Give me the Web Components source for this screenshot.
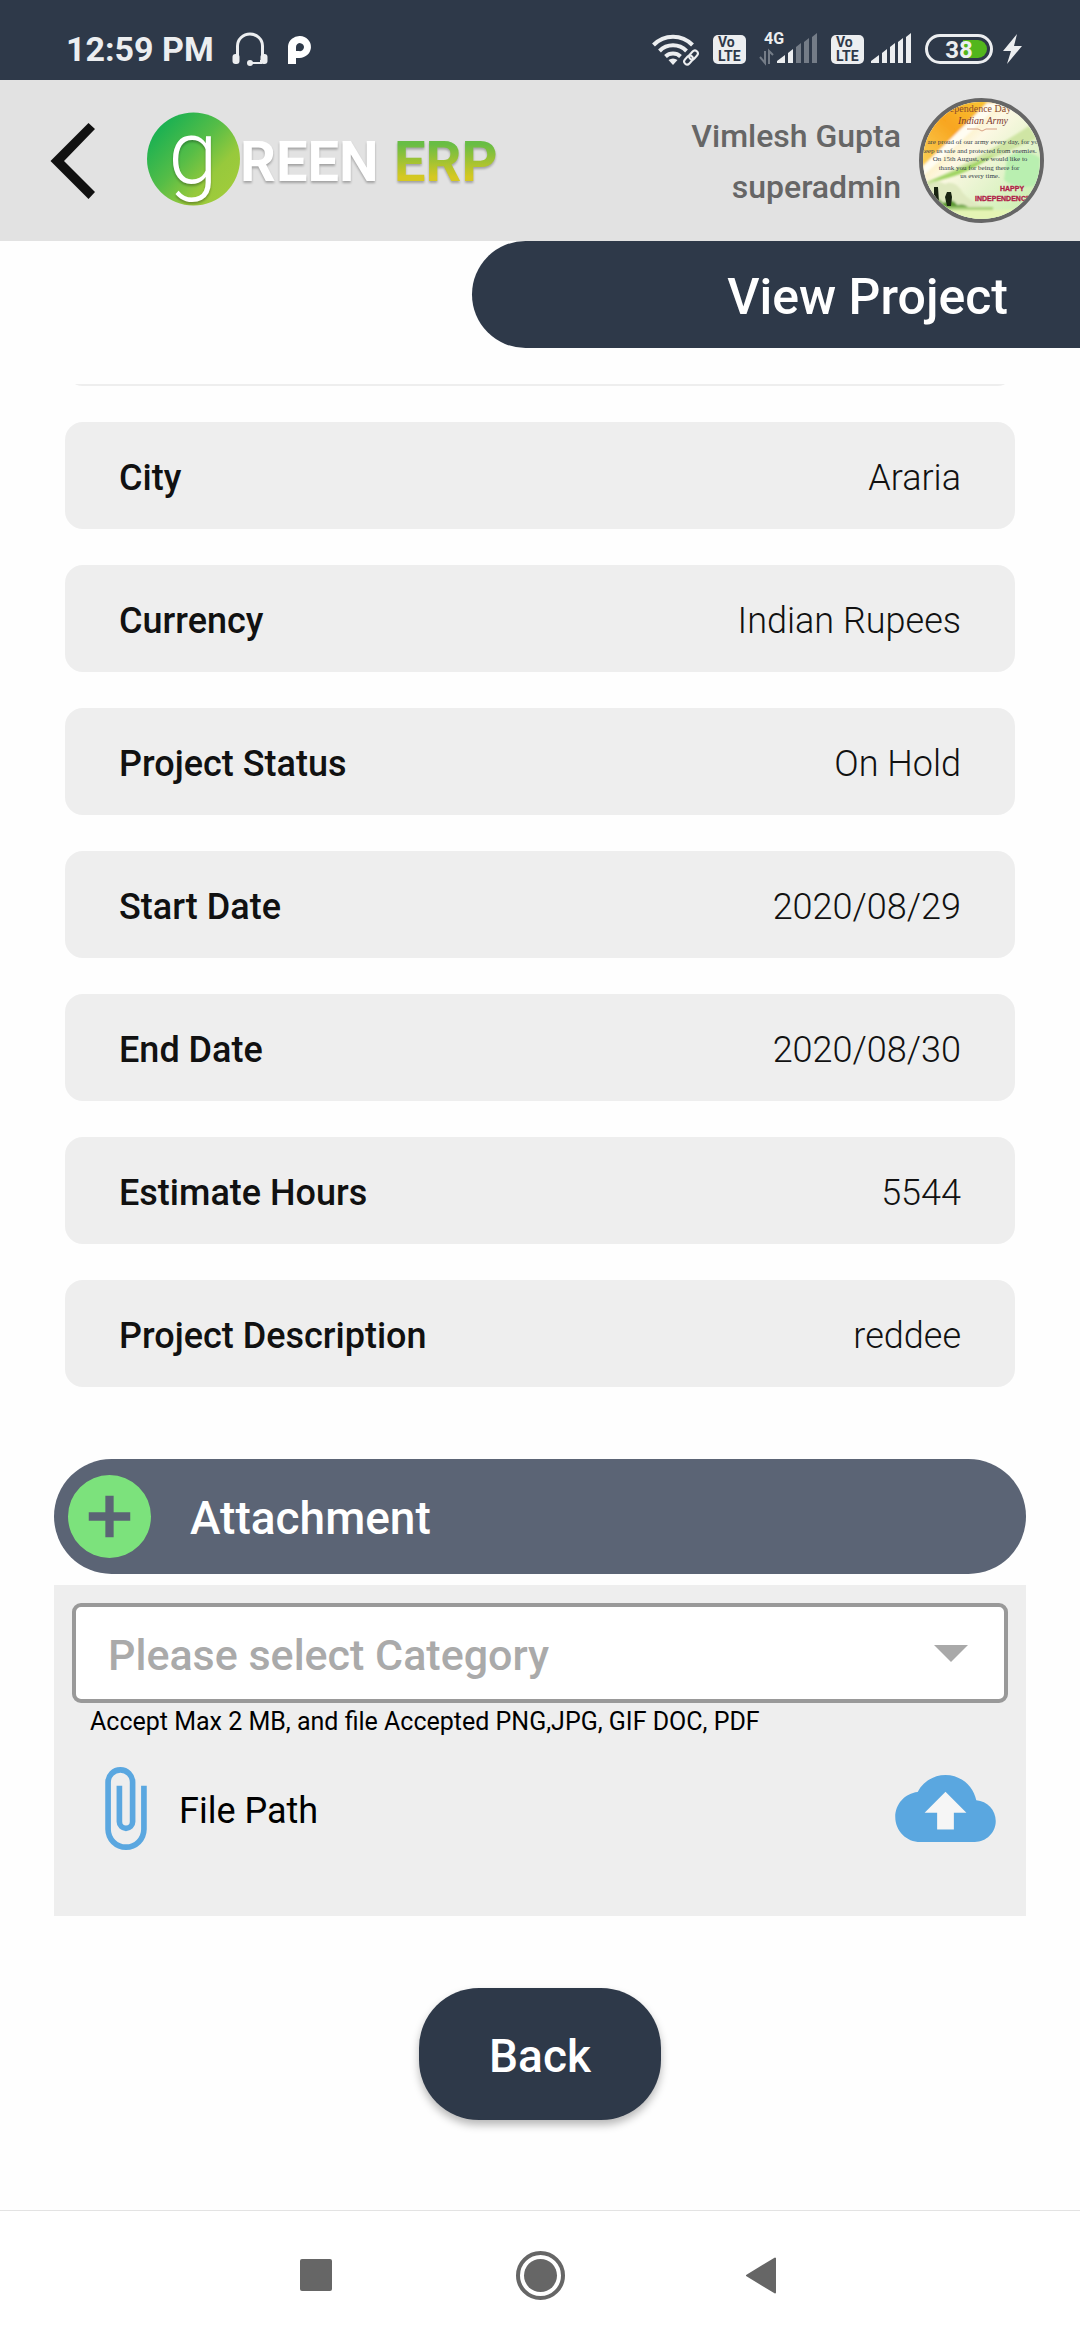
<!DOCTYPE html>
<html lang="en">
<head>
<meta charset="utf-8">
<meta name="viewport" content="width=device-width, initial-scale=1">
<title>View Project</title>
<style>
  html, body { margin: 0; }
  body { background: #fefefe; font-family: Roboto, "Liberation Sans", sans-serif; color: #111; }
</style>
</head>
<body>
<project-screen></project-screen>

<script>
const define = (name, html) => {
  const template = document.createElement('template');
  template.innerHTML = html;
  customElements.define(name, class extends HTMLElement {
    constructor() {
      super();
      this.attachShadow({ mode: 'open' }).append(template.content.cloneNode(true));
    }
  });
};

define('volte-badge', `
<style>
  :host { display: block; height: 34px; }
  svg { display: block; }
</style>
<svg width="33" height="34" viewBox="0 0 33 34" font-family="Roboto, sans-serif" font-weight="700" fill="#2e3949">
  <rect y="3" width="33" height="29" rx="5" fill="#eceef0"/>
  <text x="5" y="15" font-size="14">Vo</text>
  <text x="5" y="29" font-size="14">LTE</text>
</svg>`);

define('status-bar', `
<style>
  :host { display: flex; align-items: center; height: 34px; padding: 32px 58px 14px 66px; background: #2e3949; color: #eceef0; }
  svg { display: block; flex: none; overflow: visible; }
  time { font-size: 34px; line-height: 34px; font-weight: 700; }
  .start, .end, .signal { display: flex; align-items: center; }
  .start { gap: 18px; }
  .end { margin-left: auto; gap: 14px; }
  .signal { gap: 7px; }
  .power { display: flex; gap: 10px; }
</style>
<div class="start">
  <time>12:59 PM</time>
  <svg width="36" height="34" viewBox="0 0 36 34" fill="none" stroke="#eceef0" stroke-width="3">
    <path d="M5.500 24V14a12.500 12 0 0 1 25 0v10"/>
    <path d="M18 31h11v-3" stroke-width="2"/>
    <g fill="#eceef0" stroke="none">
      <rect x="0.500" y="22" width="7" height="10" rx="3"/><rect x="28.500" y="22" width="7" height="10" rx="3"/><circle cx="18" cy="31" r="3"/>
    </g>
  </svg>
  <svg width="26" height="34" viewBox="0 0 26 34">
    <path d="M2 32V14a11.500 11 0 1 1 11.500 12H10v6zM10 19h3a4 4 0 1 0-3-4z" fill="#fff" fill-rule="evenodd"/>
  </svg>
</div>
<div class="end">
  <svg width="47" height="34" viewBox="0 0 47 34" fill="none" stroke="#eceef0" stroke-width="4">
    <path d="M1.500 13a27 27 0 0 1 39 0M7.500 19a19 19 0 0 1 27 0M13.500 24.500a11 11 0 0 1 15 0"/>
    <path d="M16.500 28q4.500-3 9 0L21 33z" fill="#eceef0" stroke="none"/>
    <g stroke="#2e3949" stroke-width="5"><rect x="-5" y="-3" width="10" height="6" rx="3" transform="translate(41.500 23) rotate(-48)"/><rect x="-5" y="-3" width="10" height="6" rx="3" transform="translate(36.500 28) rotate(-48)"/></g>
    <g stroke-width="2"><rect x="-5" y="-3" width="10" height="6" rx="3" transform="translate(41.500 23) rotate(-48)"/><rect x="-5" y="-3" width="10" height="6" rx="3" transform="translate(36.500 28) rotate(-48)"/></g>
  </svg>
  <volte-badge></volte-badge>
  <svg width="57" height="34" viewBox="0 0 57 34">
    <text x="4" y="12" font-family="Roboto, sans-serif" font-weight="700" font-size="16" fill="#eceef0">4G</text>
    <path d="M0 25l5 6V19M13 23l-4-4v13" fill="none" stroke="#747c87" stroke-width="2"/>
    <path d="M17 31v-2l8-6v8zM28 31V21l5-4v14z" fill="#eceef0"/>
    <path d="M36 31V15l5-4v20zM44 31V10l5-4v25zM52 31V5l5-4v30z" fill="#747c87"/>
  </svg>
  <div class="signal">
    <volte-badge></volte-badge>
    <svg width="40" height="34" viewBox="0 0 40 34"><path d="M0 31v-2l8-6v8zM11 31V21l5-4v14zM19 31V15l5-4v20zM27 31V10l5-4v25zM35 31V5l5-4v30z" fill="#eceef0"/></svg>
  </div>
  <div class="power">
    <svg width="68" height="34" viewBox="0 0 68 34">
      <rect x="1.500" y="3.500" width="65" height="27" rx="13.500" fill="none" stroke="#eceef0" stroke-width="3"/>
      <path d="M38 8h15a9 9 0 0 1 0 18H38z" fill="#52b61c"/>
      <text x="34" y="26" text-anchor="middle" font-family="Roboto, sans-serif" font-weight="700" font-size="24" fill="#eceef0">38</text>
    </svg>
    <svg width="19" height="34" viewBox="0 0 19 34"><path d="M14 2L0 19h8L4 32l15-18h-8z" fill="#eceef0"/></svg>
  </div>
</div>`);

define('brand-logo', `
<style>
  :host { display: block; }
  svg { display: block; overflow: visible; }
  .lettering { filter: drop-shadow(0 2px 1px rgba(0,0,0,.28)); }
</style>
<svg width="352" height="97" viewBox="0 0 352 97" font-family="Roboto, sans-serif">
  <defs>
    <linearGradient id="ball" x1="0.100" y1="0.150" x2="0.850" y2="0.850">
      <stop offset="0" stop-color="#17b053"/><stop offset=".45" stop-color="#55bd47"/><stop offset=".78" stop-color="#97c93c"/><stop offset="1" stop-color="#9fcb3b"/>
    </linearGradient>
    <linearGradient id="word" gradientUnits="userSpaceOnUse" x1="0" y1="28" x2="0" y2="69">
      <stop offset="0.100" stop-color="#68bd45"/><stop offset=".9" stop-color="#d5c822"/>
    </linearGradient>
  </defs>
  <circle cx="46.500" cy="47" r="46.500" fill="url(#ball)"/>
  <g class="lettering" fill="#fff">
    <text x="46" y="71" text-anchor="middle" font-size="89" font-weight="300">g</text>
    <text x="93" y="69" font-size="56" font-weight="700">REEN</text>
    <text x="247" y="69" font-size="56" font-weight="700" fill="url(#word)">ERP</text>
  </g>
</svg>`);

define('user-avatar', `
<style>
  :host { display: block; width: 117px; height: 117px; border: 4px solid #666; border-radius: 50%; overflow: hidden; }
  svg { display: block; }
</style>
<svg width="117" height="117" viewBox="4 4 117 117" text-anchor="middle">
  <defs>
    <linearGradient id="sky" x1="0" y1="0" x2="1" y2="1">
      <stop offset="0" stop-color="#ffd75a"/><stop offset=".4" stop-color="#fdf8e4"/><stop offset=".7" stop-color="#dcf2c4"/><stop offset="1" stop-color="#c0eea4"/>
    </linearGradient>
    <linearGradient id="saffron" x1="1" y1="0" x2="0" y2="1">
      <stop offset="0" stop-color="#f8cf3c"/><stop offset=".5" stop-color="#f8a51f"/><stop offset="1" stop-color="#fbd860"/>
    </linearGradient>
    <filter id="soft"><feGaussianBlur stdDeviation="1"/></filter>
  </defs>
  <rect width="125" height="125" fill="url(#sky)"/>
  <g filter="url(#soft)">
    <path d="M0 0h85Q52 24 4 70L0 75z" fill="url(#saffron)"/>
    <path d="M4 68Q48 25 68 5l14 0Q44 42 4 78z" fill="#fffdf2"/>
    <path d="M4 86Q62 60 110 28l8 12Q72 62 6 89z" fill="#cfe5a4"/>
    <path d="M8 84Q50 68 76 56q-26 20-56 26z" fill="#9fd461"/>
    <path d="M88 60q16-12 33 0v26q-20 8-36-4z" fill="#b9efb0"/>
    <path d="M4 92q12-12 22-6 10-5 18 9 8 9 20 13v18H4z" fill="#dfe9c0"/>
    <path d="M4 103q12-8 20 2 10-6 14 2 8-2 12 3H4z" fill="#5f9c35"/>
    <path d="M4 109h70v3H30z" fill="#a9d17b"/>
    <path d="M4 112h80q20 0 37-8v17H4z" fill="#e4f4b4"/>
  </g>
  <path d="M15 89h4l1 15h-5zM28 94h4l1 5-1 9h-4l-2-9z" fill="#182311"/>
  <g font-family="Liberation Serif, serif" font-size="10">
    <text x="60" y="14" fill="#8a4a2c">Independence Day to</text>
    <text x="64" y="26" fill="#7c3b31" font-style="italic">Indian Army</text>
  </g>
  <path d="M48 31h11l4 2 4-2h11" fill="none" stroke="#d8a084"/>
  <g font-family="Liberation Serif, serif" font-size="7" fill="#33404a">
    <text x="60" y="46">We are proud of our army every day, for you</text>
    <text x="60" y="55">keep us safe and protected from enemies.</text>
    <text x="61" y="63">On 15th August, we would like to</text>
    <text x="60" y="72">thank you for being there for</text>
    <text x="61" y="80">us every time.</text>
  </g>
  <g font-family="Liberation Sans, sans-serif" font-size="7" font-weight="700" fill="#b01c48" stroke="#b01c48" stroke-width="0.300">
    <text x="93" y="93">HAPPY</text>
    <text x="56" y="103" text-anchor="start">INDEPENDENCE</text>
  </g>
</svg>`);

define('app-header', `
<style>
  :host { display: flex; align-items: center; height: 161px; padding: 0 36px 0 50px; background: #e2e2e2; }
  button { flex: none; padding: 0; border: 0; background: none; margin-right: 51px; cursor: pointer; }
  svg { display: block; }
  .user { margin-left: auto; margin-right: 18px; text-align: right; color: #666; font-size: 32px; line-height: 51px; font-weight: 500; padding-top: 3px; }
  .user div { white-space: nowrap; }
</style>
<button type="button" aria-label="Go back"><svg width="46" height="76" viewBox="0 0 46 76"><path d="M38.500 0L45 6 14 38l31 31-6.500 7L0.500 38z" fill="#111"/></svg></button>
<brand-logo></brand-logo>
<div class="user"><div>Vimlesh Gupta</div><div>superadmin</div></div>
<user-avatar></user-avatar>`);

define('page-title', `
<style>
  :host { display: flex; justify-content: flex-end; }
  h1 { margin: 0; box-sizing: border-box; min-width: 608px; padding: 27px 72px 22px; border-radius: 54px 0 0 54px; background: #2e3949; color: #fff; font-size: 50px; line-height: 58px; font-weight: 500; text-align: right; }
</style>
<h1><slot></slot></h1>`);

define('detail-row', `
<style>
  :host { display: flex; justify-content: space-between; gap: 36px; padding: 35px 54px 30px; border-radius: 18px; background: #eee; font-size: 36px; line-height: 42px; }
  .label { font-weight: 500; }
  .value { font-weight: 300; text-align: right; }
</style>
<span class="label"><slot name="label"></slot></span>
<span class="value"><slot></slot></span>`);

define('detail-list', `
<style>
  :host { display: flex; flex-direction: column; gap: 36px; padding: 36px 65px 72px; }
  .scrolled { display: flex; align-items: flex-end; height: 2px; overflow: hidden; }
  .scrolled div { flex: 1; height: 107px; border-radius: 18px; background: #eee; }
</style>
<div class="scrolled"><div></div></div>
<slot></slot>`);

define('attachment-panel', `
<style>
  :host { display: block; padding: 0 54px; }
  svg { display: block; }
  button { padding: 0; border: 0; background: none; font: inherit; color: inherit; cursor: pointer; }
  .bar { display: flex; align-items: center; gap: 39px; padding: 16px 14px; border-radius: 58px; background: #5b6475; color: #fff; }
  h2 { margin: 0; padding-top: 3px; font-size: 46px; line-height: 54px; font-weight: 500; }
  .body { margin-top: 11px; padding: 18px 18px 66px; background: #eee; }
  .picker { display: grid; align-items: center; }
  .picker > * { grid-area: 1 / 1; }
  select { appearance: none; box-sizing: border-box; width: 100%; height: 100px; margin: 0; padding: 4px 90px 0 32px; border: 4px solid #999; border-radius: 9px; background: #fff; color: #aaa; font: 500 43px/50px Roboto, "Liberation Sans", sans-serif; }
  .picker svg { justify-self: end; margin-right: 40px; pointer-events: none; }
  p { margin: 4px 18px 30px; font-size: 25px; line-height: 30px; color: #000; }
  .file { display: flex; align-items: center; justify-content: space-between; padding: 0 12px 0 33px; }
  .path { display: flex; align-items: center; gap: 32px; font-size: 36px; line-height: 42px; color: #000; }
  .path span { padding-top: 4px; }
</style>
<div class="bar">
  <button type="button" aria-label="Add attachment"><svg width="83" height="83" viewBox="2 2 20 20"><path d="M12 2a10 10 0 1 0 0 20 10 10 0 0 0 0-20zm5 11h-4v4h-2v-4H7v-2h4V7h2v4h4z" fill="#7ce27c"/></svg></button>
  <h2>Attachment</h2>
</div>
<div class="body">
  <div class="picker">
    <select aria-label="Category"><option>Please select Category</option></select>
    <svg width="34" height="17" viewBox="0 0 34 17"><path d="M0 0h34L17 17z" fill="#a9a9a9"/></svg>
  </div>
  <p>Accept Max 2 MB, and file Accepted PNG,JPG, GIF DOC, PDF</p>
  <div class="file">
    <button type="button" class="path">
      <svg width="42" height="83" viewBox="7 1 11 22"><path d="M16.500 6v11.500a4 4 0 0 1-8 0V5a2.500 2.500 0 0 1 5 0v10.500a1 1 0 0 1-2 0V6H10v9.500a2.500 2.500 0 0 0 5 0V5a4 4 0 0 0-8 0v12.500a5.500 5.500 0 0 0 11 0V6z" fill="#5aa7e0"/></svg>
      <span>File Path</span>
    </button>
    <button type="button" aria-label="Upload"><svg width="101" height="67" viewBox="0 4 24 16"><path d="M7 13l5-5 5 5h-3v4h-4v-4z" fill="#f6f6f6"/><path d="M19.350 10.040C18.670 6.590 15.640 4 12 4 9.110 4 6.600 5.640 5.350 8.040 2.340 8.360 0 10.910 0 14c0 3.310 2.690 6 6 6h13c2.760 0 5-2.240 5-5 0-2.640-2.050-4.780-4.650-4.960zM14 13v4h-4v-4H7l5-5 5 5z" fill="#5aa7e0"/></svg></button>
  </div>
</div>`);

define('pill-button', `
<style>
  :host { display: flex; justify-content: center; padding: 72px 0; }
  button { min-width: 242px; padding: 41px 70px 37px; border: 0; border-radius: 60px; background: #2e3949; color: #fff; font: 500 46px/54px Roboto, "Liberation Sans", sans-serif; box-shadow: 0 5px 8px rgba(0,0,0,.28); cursor: pointer; }
</style>
<button type="button"><slot></slot></button>`);

define('system-nav', `
<style>
  :host { display: block; border-top: 1px solid #e3e3e3; background: #fff; }
  nav { display: flex; justify-content: center; align-items: center; gap: 172px; height: 129px; }
  button { display: grid; place-items: center; width: 49px; height: 49px; padding: 0; border: 0; background: none; cursor: pointer; }
  svg { display: block; }
</style>
<nav>
  <button type="button" aria-label="Recent apps"><svg width="49" height="49"><rect x="5" y="8" width="32" height="32" rx="2" fill="#666"/></svg></button>
  <button type="button" aria-label="Home"><svg width="49" height="49"><circle cx="24.500" cy="24.500" r="22.500" fill="none" stroke="#666" stroke-width="4"/><circle cx="24.500" cy="24.500" r="16.500" fill="#666"/></svg></button>
  <button type="button" aria-label="Back"><svg width="49" height="49"><path d="M10 24.500L38 7.500v34z" fill="#666" stroke="#666" stroke-width="2" stroke-linejoin="round"/></svg></button>
</nav>`);

define('project-screen', `
<style>
  :host { display: flex; flex-direction: column; min-height: 100vh; }
  main { flex: 1; }
</style>
<status-bar></status-bar>
<app-header></app-header>
<main>
  <page-title>View Project</page-title>
  <detail-list>
    <detail-row><span slot="label">City</span>Araria</detail-row>
    <detail-row><span slot="label">Currency</span>Indian Rupees</detail-row>
    <detail-row><span slot="label">Project Status</span>On Hold</detail-row>
    <detail-row><span slot="label">Start Date</span>2020/08/29</detail-row>
    <detail-row><span slot="label">End Date</span>2020/08/30</detail-row>
    <detail-row><span slot="label">Estimate Hours</span>5544</detail-row>
    <detail-row><span slot="label">Project Description</span>reddee</detail-row>
  </detail-list>
  <attachment-panel></attachment-panel>
  <pill-button>Back</pill-button>
</main>
<system-nav></system-nav>`);
</script>
</body>
</html>
